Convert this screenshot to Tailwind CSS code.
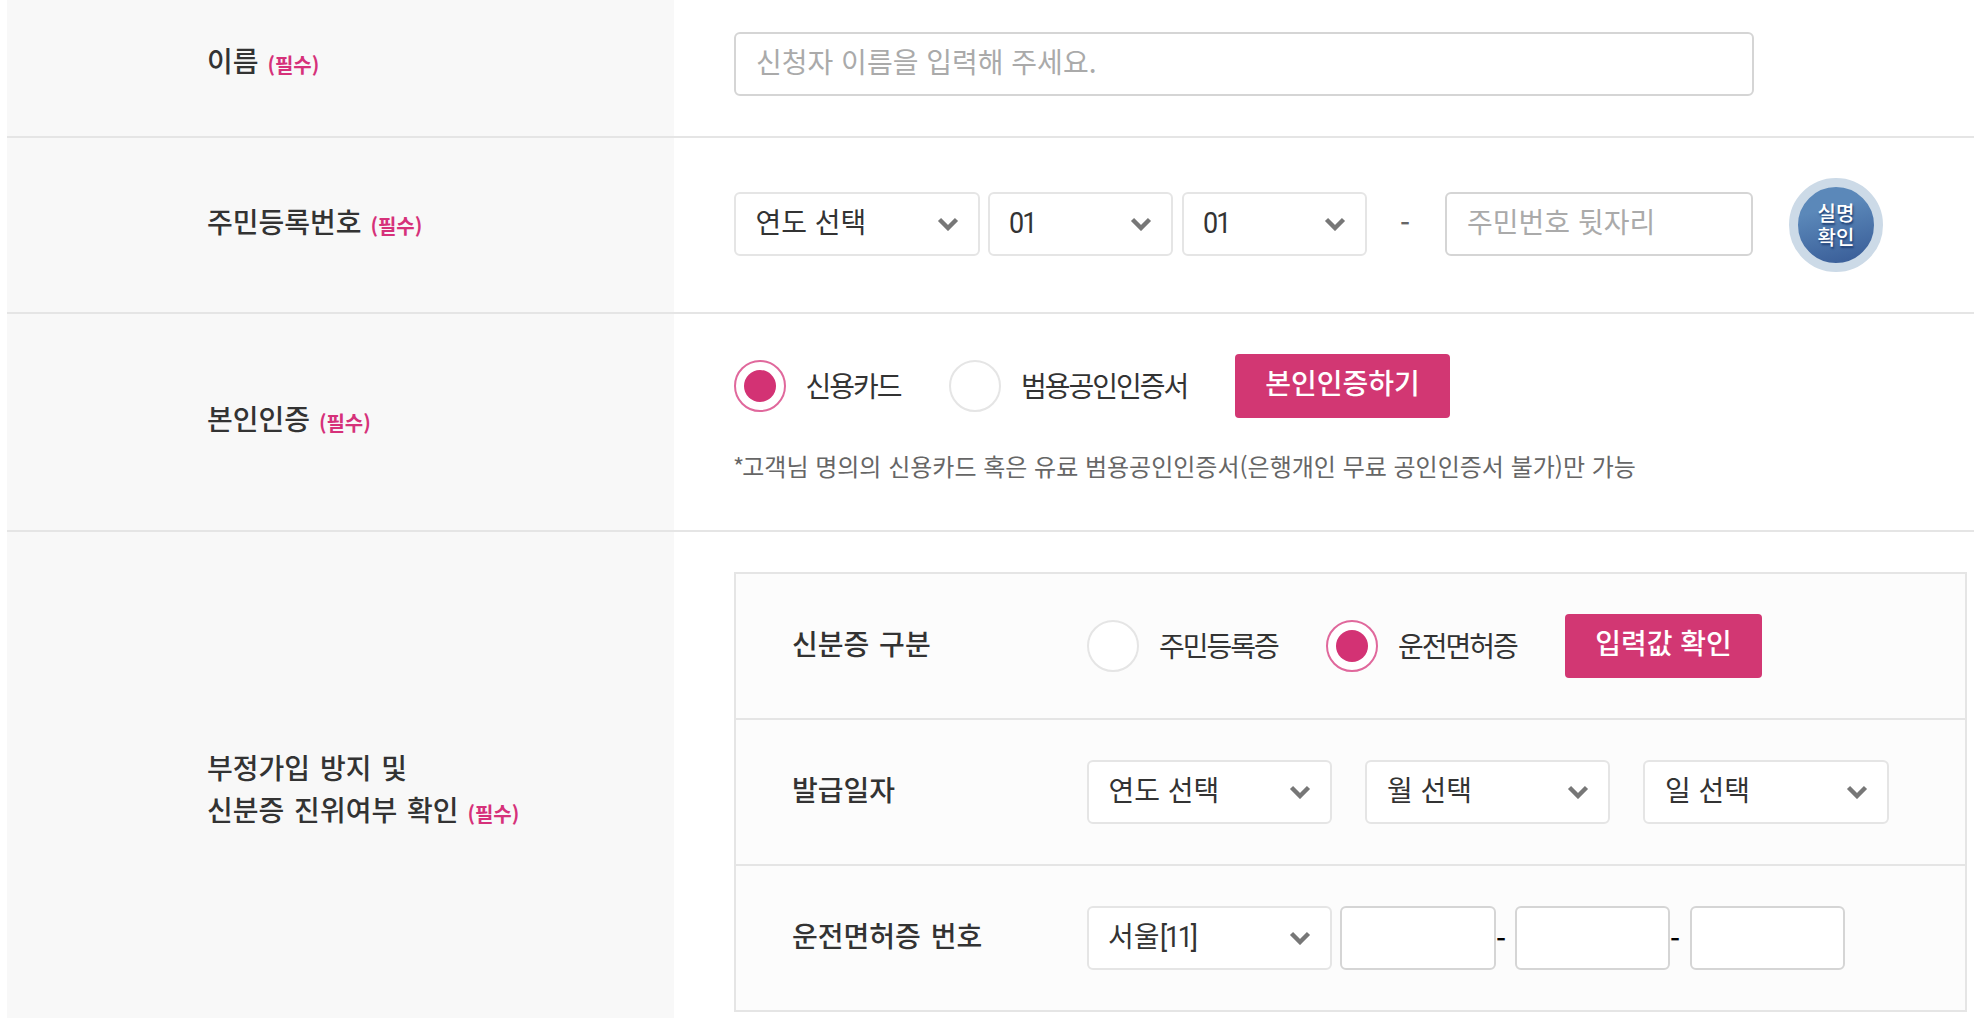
<!DOCTYPE html>
<html lang="ko">
  <head>
    <meta charset="UTF-8" />
    <meta name="viewport" content="width=device-width, initial-scale=1.0" />
    <title>가입 신청서</title>
    <script src="https://cdn.jsdelivr.net/npm/@tailwindcss/browser@4"></script>
  </head>
  <body
    class="bg-white text-[28px] leading-[42px] text-[#333] font-['Noto_Sans_CJK_KR',sans-serif] overflow-hidden"
  >
    <!-- Chevron used by every select -->
    <svg class="hidden">
      <symbol id="chevron" viewBox="0 0 22 14">
        <path
          d="M2.5 2.5 11 11 19.5 2.5"
          fill="none"
          stroke="#777"
          stroke-width="4.4"
        />
      </symbol>
    </svg>

    <form class="pl-[7px] h-[1018px] overflow-hidden">
      <!-- Name -->
      <div class="flex h-[138px] border-b-2 border-[#e5e5e5]">
        <div class="w-[667px] shrink-0 bg-[#f8f8f8] pl-[200px] pt-[39px] font-medium [word-spacing:2px]">
          이름
          <span class="inline-block -ml-px translate-y-px text-xl font-bold text-[#d6317a]">(필수)</span>
        </div>
        <div class="pl-[60px] pt-8">
          <input
            type="text"
            placeholder="신청자 이름을 입력해 주세요."
            class="block w-[1020px] h-16 px-5 pb-1.5 bg-white border-2 border-[#d5d5d5] rounded-md placeholder:text-[#aaa]"
          />
        </div>
      </div>

      <!-- Resident registration number -->
      <div class="flex h-[176px] border-b-2 border-[#e5e5e5]">
        <div class="w-[667px] shrink-0 bg-[#f8f8f8] pl-[200px] pt-[62px] font-medium [word-spacing:2px]">
          주민등록번호
          <span class="inline-block -ml-px translate-y-px text-xl font-bold text-[#d6317a]">(필수)</span>
        </div>
        <div class="flex pl-[60px] pt-10">
          <div class="flex pt-3.5">
            <button type="button" class="flex items-center justify-between w-[246px] h-16 pl-[19.5px] pr-[19px] mr-2 bg-white border-2 border-[#e5e5e5] rounded-md">
              <span class="pb-1.5">연도 선택</span>
              <svg class="w-[22px] h-3.5"><use href="#chevron" /></svg>
            </button>
            <button type="button" class="flex items-center justify-between w-[185px] h-16 pl-[19px] pr-[19px] mr-[9px] bg-white border-2 border-[#e5e5e5] rounded-md">
              <span class="pb-[3px] origin-left scale-x-90 font-[Roboto] text-[30px] tracking-[-2px]">01</span>
              <svg class="w-[22px] h-3.5"><use href="#chevron" /></svg>
            </button>
            <button type="button" class="flex items-center justify-between w-[185px] h-16 pl-[19px] pr-[19px] bg-white border-2 border-[#e5e5e5] rounded-md">
              <span class="pb-[3px] origin-left scale-x-90 font-[Roboto] text-[30px] tracking-[-2px]">01</span>
              <svg class="w-[22px] h-3.5"><use href="#chevron" /></svg>
            </button>
            <span class="w-[78px] pt-[9px] pr-0.5 text-center font-medium text-[#666]">-</span>
            <input
              type="text"
              placeholder="주민번호 뒷자리"
              class="block w-[308px] h-16 px-5 pb-1.5 bg-white border-2 border-[#d5d5d5] rounded-md placeholder:text-[#aaa]"
            />
          </div>
          <button
            type="button"
            class="flex flex-col items-center justify-center size-[94px] ml-9 rounded-full border-[9px] border-[#ccdae7] bg-linear-165 from-[#5b88b9] from-30% to-[#375a95] text-xl leading-6 font-medium text-white text-shadow-[1px_2px_2px_#1d3c70]"
          >
            <span>실명</span>
            <span>확인</span>
          </button>
        </div>
      </div>

      <!-- Identity verification -->
      <div class="flex h-[218px] border-b-2 border-[#e5e5e5]">
        <div class="w-[667px] shrink-0 bg-[#f8f8f8] pl-[200px] pt-[83px] font-medium [word-spacing:2px]">
          본인인증
          <span class="inline-block -ml-px translate-y-px text-xl font-bold text-[#d6317a]">(필수)</span>
        </div>
        <div class="pl-[60px] pt-10">
          <div class="flex items-center">
            <label class="flex items-center w-[215px]">
              <span class="flex items-center justify-center size-[52px] mr-[19.5px] bg-white border-2 border-[#e0689c] rounded-full">
                <span class="size-8 rounded-full bg-[#d33274]"></span>
              </span>
              <span class="pb-0.5 tracking-[-2px]">신용카드</span>
            </label>
            <label class="flex items-center w-[286px]">
              <span class="size-[52px] mr-5 bg-white border-2 border-[#e5e5e5] rounded-full"></span>
              <span class="pb-0.5 tracking-[-2px]">범용공인인증서</span>
            </label>
            <button type="button" class="w-[215px] h-16 pb-2 rounded bg-[#d23773] font-medium text-white">
              본인인증하기
            </button>
          </div>
          <p class="-ml-px mt-[30px] text-2xl leading-9 text-[#666]">
            <span class="tracking-[-2px]">*</span>고객님 명의의 신용카드 혹은 유료 범용공인인증서(은행개인 무료 공인인증서 불가)만 가능
          </p>
        </div>
      </div>

      <!-- ID card check -->
      <div class="flex h-[520px]">
        <div class="w-[667px] shrink-0 bg-[#f8f8f8] pl-[200px] pt-[214px] font-medium [word-spacing:2px]">
          부정가입 방지 및<br />
          신분증 진위여부 확인
          <span class="inline-block -ml-px translate-y-px text-xl font-bold text-[#d6317a]">(필수)</span>
        </div>
        <div class="pl-[60px] pt-10">
          <div class="w-[1233px] h-[440px] bg-[#fcfcfc] border-2 border-[#e5e5e5] divide-y-2 divide-[#e5e5e5]">
            <div class="flex items-center h-[146px] pl-14">
              <div class="w-[295px] pb-1.5 font-medium [word-spacing:2px]">신분증 구분</div>
              <label class="flex items-center w-[239px]">
                <span class="size-[52px] mr-5 bg-white border-2 border-[#e5e5e5] rounded-full"></span>
                <span class="pb-0.5 tracking-[-2px]">주민등록증</span>
              </label>
              <label class="flex items-center w-[239px]">
                <span class="flex items-center justify-center size-[52px] mr-5 bg-white border-2 border-[#e0689c] rounded-full">
                  <span class="size-8 rounded-full bg-[#d33274]"></span>
                </span>
                <span class="pb-0.5 tracking-[-2px]">운전면허증</span>
              </label>
              <button type="button" class="w-[197px] h-16 pb-2 rounded bg-[#d23773] font-medium text-white">
                입력값 확인
              </button>
            </div>

            <div class="flex items-center h-[146px] pl-14">
              <div class="w-[295px] pb-1.5 font-medium [word-spacing:2px]">발급일자</div>
              <div class="flex gap-[33px]">
                <button type="button" class="flex items-center justify-between w-[245px] h-16 pl-[19.5px] pr-[19px] bg-white border-2 border-[#e5e5e5] rounded-md">
                  <span class="pb-1.5">연도 선택</span>
                  <svg class="w-[22px] h-3.5"><use href="#chevron" /></svg>
                </button>
                <button type="button" class="flex items-center justify-between w-[245px] h-16 pl-5 pr-[19px] bg-white border-2 border-[#e5e5e5] rounded-md">
                  <span class="pb-1.5">월 선택</span>
                  <svg class="w-[22px] h-3.5"><use href="#chevron" /></svg>
                </button>
                <button type="button" class="flex items-center justify-between w-[246px] h-16 pl-5 pr-[19px] bg-white border-2 border-[#e5e5e5] rounded-md">
                  <span class="pb-1.5">일 선택</span>
                  <svg class="w-[22px] h-3.5"><use href="#chevron" /></svg>
                </button>
              </div>
            </div>

            <div class="flex items-center h-[144px] pl-14">
              <div class="w-[295px] pb-1.5 font-medium [word-spacing:2px]">운전면허증 번호</div>
              <button type="button" class="flex items-center justify-between w-[245px] h-16 pl-[19px] pr-[19px] mr-2 bg-white border-2 border-[#e5e5e5] rounded-md">
                <span class="pb-1">서울<span class="inline-block origin-left scale-x-90 font-[Roboto] text-[30px] tracking-[-2.5px]">[11]</span></span>
                <svg class="w-[22px] h-3.5"><use href="#chevron" /></svg>
              </button>
              <input type="text" class="w-[156px] h-16 px-5 bg-white border-2 border-[#d5d5d5] rounded-md" />
              <span class="w-[19px] font-medium text-black">-</span>
              <input type="text" class="w-[155px] h-16 px-5 bg-white border-2 border-[#d5d5d5] rounded-md" />
              <span class="w-5 font-medium text-black">-</span>
              <input type="text" class="w-[155px] h-16 px-5 bg-white border-2 border-[#d5d5d5] rounded-md" />
            </div>
          </div>
        </div>
      </div>
    </form>
  </body>
</html>
